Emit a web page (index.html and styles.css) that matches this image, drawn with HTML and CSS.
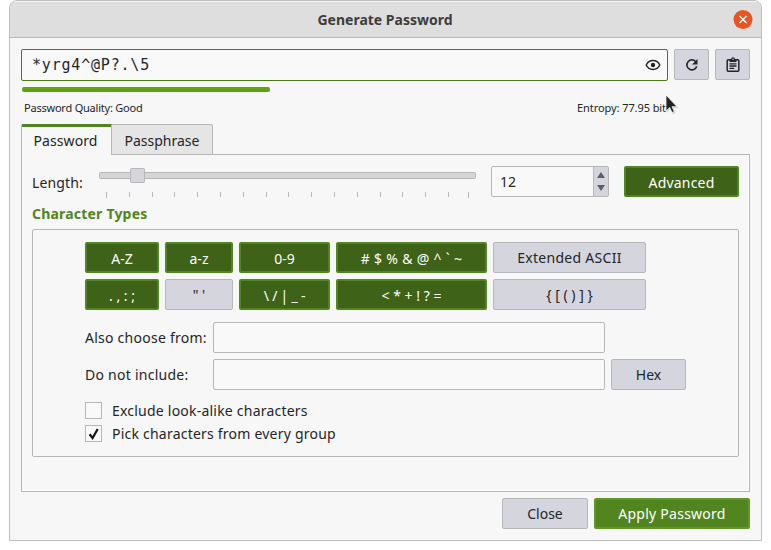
FILE: index.html
```html
<!DOCTYPE html>
<html lang="en">
<head>
<meta charset="utf-8">
<title>Generate Password</title>
<link rel="stylesheet" href="styles.css">
</head>
<body>
<main class="window">
  <header class="titlebar">
    <h1>Generate Password</h1>
    <button class="close" aria-label="Close window"><svg width="20" height="20" viewBox="0 0 20 20"><circle cx="10" cy="9.500" r="9.500" fill="#e95420"/><path d="M6.500 6l7 7M13.500 6l-7 7" stroke="#fff" stroke-width="1.500"/></svg></button>
  </header>
  <div class="content">
    <div class="password-row">
      <div class="password-field"><span>*yrg4^@P?.\5</span>
        <svg width="16" height="16" viewBox="0 0 16 16"><path d="M1.200 8C4 2.100 12 2.100 14.800 8C12 13.900 4 13.900 1.200 8Z" fill="none" stroke="#232629" stroke-width="1.500"/><circle cx="8" cy="8" r="2.200" fill="#232629"/></svg>
      </div>
      <button class="btn icon"><svg width="16" height="16" viewBox="0 0 16 16"><path d="M12.700 9.200A5 5 0 1 1 11.800 4.700" fill="none" stroke="#232629" stroke-width="1.600"/><path d="M13.500 2v5.400H8.100Z" fill="#232629"/></svg></button>
      <button class="btn icon"><svg width="16" height="16" viewBox="0 0 16 16"><rect x="2.200" y="2.700" width="11.600" height="11.600" rx="1" fill="none" stroke="#232629" stroke-width="1.500"/><path d="M4.500 2.200H6a2 2 0 0 1 4 0h1.500V5h-7Z" fill="#232629"/><circle cx="8" cy="2.300" r=".7" fill="#d5d5de"/><path d="M4.500 6.800h7M4.500 9h7M4.500 11.300h4.700" stroke="#232629" stroke-width="1.300"/></svg></button>
    </div>
    <div class="quality-bar"></div>
    <div class="quality-row"><span class="quality">Password Quality: Good</span><span class="entropy">Entropy: 77.95 bit
      <svg class="cursor" width="14" height="23" viewBox="0 0 14 23"><path d="M1 1V17.500L4.700 14L7 19.300L9.800 18L7.400 13H12.500Z" fill="#aaa" opacity=".5" transform="translate(.8 1)"/><path d="M1 1V17L4.700 13.500L7 18.500L9.300 17.500L7 12.700H12Z" fill="#222" stroke="#f5f5f5" stroke-width=".8"/></svg></span></div>
    <nav class="tabs"><button class="tab active">Password</button><button class="tab">Passphrase</button></nav>
    <section class="panel">
      <div class="length-row">
        <span class="length-label">Length:</span>
        <svg class="slider" width="378" height="31" viewBox="0 0 378 31">
          <rect x=".5" y="4.500" width="376" height="6" rx="1" fill="#d6d6d6" stroke="#b7b7b7"/>
          <rect x="31.500" y=".5" width="14" height="14" rx="1" fill="#d5d5de" stroke="#b7b7bb"/>
          <path d="M7.500 24v6M30.500 24v5M53.500 24v5M75.500 24v5M98.500 24v5M121.500 24v5M144.500 24v5M167.500 24v5M189.500 24v5M212.500 24v5M235.500 24v5M258.500 24v5M281.500 24v5M303.500 24v5M326.500 24v5M349.500 24v5M369.500 24v6" stroke="#b7b7b7"/>
        </svg>
        <div class="spin"><span>12</span><div class="arrows"><svg width="14" height="29" viewBox="0 0 14 29"><path d="M3 11L7 5L11 11ZM3 18L7 24L11 18Z" fill="#5d5f63"/></svg></div></div>
        <button class="btn on advanced">Advanced</button>
      </div>
      <h2>Character Types</h2>
      <div class="group">
        <div class="types">
          <button class="btn on">A-Z</button><button class="btn on">a-z</button><button class="btn on">0-9</button><button class="btn on symbols">#&nbsp;$&nbsp;%&nbsp;&amp;&nbsp;@&nbsp;^&nbsp;`&nbsp;~</button><button class="btn extended">Extended ASCII</button>
          <button class="btn on">.&nbsp;,&nbsp;:&nbsp;;</button><button class="btn">"&nbsp;'</button><button class="btn on slashes">\&nbsp;/&nbsp;|&nbsp;_&nbsp;-</button><button class="btn on">&lt;&nbsp;*&nbsp;+&nbsp;!&nbsp;?&nbsp;=</button><button class="btn">{&nbsp;[&nbsp;(&nbsp;)&nbsp;]&nbsp;}</button>
        </div>
        <div class="fields">
          <span class="also">Also choose from:</span><div class="input"></div><span></span>
          <span class="exclude">Do not include:</span><div class="input"></div><button class="btn">Hex</button>
        </div>
        <div class="check"><i class="box"></i><span>Exclude look-alike characters</span></div>
        <div class="check"><i class="box"><svg width="15" height="15" viewBox="0 0 15 15"><path d="M3.600 8.200L6.600 12L11.700 3" fill="none" stroke="#151515" stroke-width="2.200"/></svg></i><span>Pick characters from every group</span></div>
      </div>
    </section>
    <footer><button class="btn close-btn">Close</button><button class="btn apply">Apply Password</button></footer>
  </div>
</main>
</body>
</html>
```
FILE: styles.css
```css
* { box-sizing: border-box; }
body { margin: 0; background: #fff; color: #232629; font: 14px/20px "Noto Sans", "Open Sans", sans-serif; }
button { font: inherit; color: inherit; padding: 0; margin: 0; white-space: nowrap; }
svg { display: block; flex: none; }
h1, h2 { margin: 0; }
.window { width: 753px; height: 541px; margin-left: 9px; border: 1px solid #bfbfbf; border-radius: 8px 8px 0 0; background: #f7f7f7; overflow: hidden; }
.titlebar { height: 37px; display: grid; grid-template-columns: 1fr auto 1fr; align-items: center; background: #dedede; border-top: 1px solid #f5f5f5; border-bottom: 1px solid #b7b7b7; }
.titlebar h1 { grid-column: 2; font-size: 14px; line-height: 20px; color: #3d3d3d; padding-right: 1px; }
.close { justify-self: end; margin-right: 8px; border: 0; background: none; }
.content { padding: 11px; }
.password-row { display: flex; gap: 6px; height: 32px; }
.password-field { width: 647px; border: 1px solid #4b7a19; border-radius: 2px; background: #f9f9f9; display: flex; align-items: center; justify-content: space-between; padding: 0 6px 0 10px; font: 15px/20px "DejaVu Sans Mono", monospace; letter-spacing: .8px; }
.btn { height: 31px; border: 1px solid #b7b7bb; border-radius: 2px; background: #d5d5de; display: flex; align-items: center; justify-content: center; }
.icon { width: 35px; }
.on { color: #fff; background: #3e6217; border: 2px solid #508520; padding-top: 2px; }
.apply { color: #fff; background: #508520; border: 2px solid #5f9a27; width: 156px; letter-spacing: .25px; }
.quality-bar { width: 248px; height: 5px; margin: 6px 0 0 1px; border-radius: 2px; background: #5fa113; }
.quality-row { display: flex; height: 32px; justify-content: space-between; padding: 7px 84px 0 3px; font-size: 11px; line-height: 17px; }
.quality { letter-spacing: -.22px; }
.entropy { position: relative; letter-spacing: -.08px; }
.cursor { position: absolute; left: 88px; top: -5px; }
.tabs { display: flex; height: 31px; position: relative; margin-bottom: -1px; }
.tab { width: 101px; height: 31px; border: 1px solid #b7b7b7; border-left: 0; background: #e5e5e5; border-top-right-radius: 2px; padding-top: 3px; }
.tab.active { width: 91px; border: 1px solid #b7b7b7; border-top: 3px solid #508520; border-bottom: 0; background: #f7f7f7; padding: 0 2px 1px 0; border-radius: 2px 0 0; letter-spacing: .1px; }
.panel { height: 338px; border: 1px solid #b7b7b7; padding: 11px 10px; box-shadow: inset -1px -1px #fff; }
.length-row { display: flex; height: 31px; }
.length-label { width: 67px; padding-top: 7px; letter-spacing: .15px; }
.slider { margin-top: 2px; }
.spin { width: 118px; margin-left: 14px; border: 1px solid #b7b7b7; border-radius: 2px; background: #f9f9f9; display: flex; justify-content: space-between; align-items: center; padding-left: 8px; }
.spin span { padding-top: 1px; }
.arrows { border-left: 1px solid #b7b7b7; background: #d5d5de; }
.advanced { width: 115px; margin-left: 15px; letter-spacing: .2px; }
h2 { font-size: 14px; line-height: 20px; color: #508520; margin: 7px 0 5px; letter-spacing: .2px; }
.group { width: 707px; height: 228px; border: 1px solid #b7b7b7; border-radius: 2px; padding: 12px 52px; }
.types { display: grid; grid-template-columns: 74px 68px 91px 151px 153px; gap: 6px; }
.symbols { letter-spacing: .3px; }
.slashes { letter-spacing: -.2px; }
.extended { letter-spacing: .3px; }
.fields { display: grid; grid-template-columns: 122px 392px 75px; column-gap: 6px; row-gap: 6px; margin: 12px 0; align-items: center; }
.fields span { white-space: nowrap; letter-spacing: .25px; }
.input { height: 31px; border: 1px solid #b7b7b7; border-radius: 2px; background: #f9f9f9; }
.check { display: flex; align-items: center; height: 17px; gap: 10px; margin-bottom: 6px; letter-spacing: .22px; }
.box { width: 17px; height: 17px; border: 1px solid #b7b7b7; background: #f9f9f9; }
footer { display: flex; justify-content: flex-end; gap: 6px; margin-top: 6px; }
.close-btn { width: 86px; }
```
